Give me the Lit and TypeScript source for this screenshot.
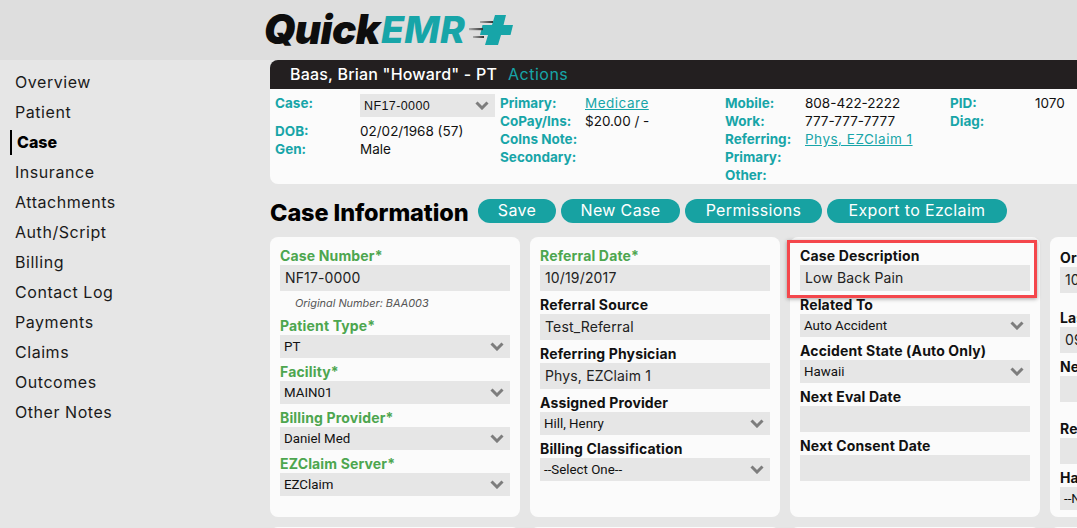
import { LitElement, html, css, svg } from "lit";
import { customElement } from "lit/decorators.js";

const chevron = html`<svg class="chev" width="14" height="9" viewBox="0 0 14 9"><polyline points="1.5,1.5 7,7 12.5,1.5" fill="none" stroke="#7d7d7d" stroke-width="3"/></svg>`;

const nav = ["Overview","Patient","Case","Insurance","Attachments","Auth/Script","Billing","Contact Log","Payments","Claims","Outcomes","Other Notes"];

type F = { l: string; v?: string; sel?: boolean; req?: boolean; note?: string; cls?: string };

const col1: F[] = [
  { l: "Case Number", v: "NF17-0000", req: true, note: "Original Number: BAA003" },
  { l: "Patient Type", v: "PT", sel: true, req: true },
  { l: "Facility", v: "MAIN01", sel: true, req: true },
  { l: "Billing Provider", v: "Daniel Med", sel: true, req: true },
  { l: "EZClaim Server", v: "EZClaim", sel: true, req: true },
];
const col2: F[] = [
  { l: "Referral Date", v: "10/19/2017", req: true },
  { l: "Referral Source", v: "Test_Referral" },
  { l: "Referring Physician", v: "Phys, EZClaim 1" },
  { l: "Assigned Provider", v: "Hill, Henry", sel: true },
  { l: "Billing Classification", v: "--Select One--", sel: true },
];
const col3: F[] = [
  { l: "Case Description", v: "Low Back Pain" },
  { l: "Related To", v: "Auto Accident", sel: true },
  { l: "Accident State (Auto Only)", v: "Hawaii", sel: true },
  { l: "Next Eval Date", v: "" },
  { l: "Next Consent Date", v: "" },
];
const col4: F[] = [
  { l: "Original Date", v: "10/19/2017", cls: "g0" },
  { l: "Last Seen Date", v: "09/12/2018", cls: "g16" },
  { l: "Next Visit Date", v: "" },
  { l: "Referral Expires", v: "", cls: "g18" },
  { l: "Has Attorney", v: "--None--", sel: true },
];

@customElement("app-root")
export class AppRoot extends LitElement {
  static styles = css`
    :host { display: block; width: 100%; height: 100vh; overflow: hidden; background: #e6e6e6; font-family: Inter, "Noto Sans", sans-serif; color: #111; font-size: 13.5px; }
    .top { height: 60px; background: #dedede; display: flex; align-items: center; padding-left: 264px; box-sizing: border-box; }
    .logo { display: flex; align-items: center; height: 44px; width: 250px; }
    .quick, .emr { font-family: Inter, sans-serif; font-style: italic; line-height: 44px; white-space: nowrap; }
    .quick { color: #0d0d0d; font-weight: 900; font-size: 40.5px; letter-spacing: -.6px; width: 117px; flex: none; }
    .emr { color: #17a5a8; font-weight: 800; font-size: 37.5px; letter-spacing: .2px; width: 87px; flex: none; }
    .plus { display: block; flex: none; }
    .shell { display: flex; }
    nav { width: 270px; flex: none; padding-top: 7px; box-sizing: border-box; }
    .nav-item { height: 30px; line-height: 30px; padding-left: 15px; font-size: 16px; letter-spacing: .55px; color: #1a1a1a; white-space: nowrap; }
    .nav-item.active { font-weight: 800; color: #000; padding-left: 5px; margin-left: 10px; border-left: 2px solid #000; height: 25px; line-height: 25px; margin-top: 3px; margin-bottom: 2px; letter-spacing: 0; }
    main { flex: 1; min-width: 0; overflow: hidden; }
    .bar { height: 29px; background: #231f20; color: #fff; border-top-left-radius: 8px; display: flex; align-items: center; padding: 0 0 2px 20px; box-sizing: border-box; font-size: 16px; font-weight: 500; white-space: nowrap; gap: 11px; width: 900px; letter-spacing: .2px; }
    .bar a { color: #17a5a8; font-weight: 400; letter-spacing: .5px; }
    .info { height: 95px; background: #fbfbfb; border-bottom-left-radius: 8px; display: flex; width: 900px; padding-left: 5px; box-sizing: border-box; font-size: 13.5px; line-height: 18px; }
    .icol { display: grid; width: 225px; flex: none; align-content: start; padding-top: 5px; box-sizing: border-box; }
    .icol.a { grid-template-columns: 85px 135px; }
    .icol.b { grid-template-columns: 85px 140px; }
    .icol.c { grid-template-columns: 80px 145px; }
    .k { color: #17a5a8; font-weight: 700; white-space: nowrap; }
    .v { white-space: nowrap; color: #111; }
    .info a { color: #17a5a8; text-decoration: underline; letter-spacing: .5px; }
    .case-sel { height: 23px; background: #e6e6e6; display: flex; align-items: center; justify-content: space-between; padding: 0 6px 0 4px; margin-bottom: 5px; font-size: 12.5px; font-family: "Liberation Sans", sans-serif; letter-spacing: .4px; }
    .head { display: flex; align-items: center; margin-top: 15px; height: 24px; white-space: nowrap; }
    h1 { font-size: 23.5px; font-weight: 800; margin: 2px 10px 0 0; color: #000; width: 198px; letter-spacing: -.1px; flex: none; }
    .btn { height: 24px; line-height: 23px; border-radius: 12px; background: #17a2a2; color: #fff; font-size: 16px; text-align: center; margin-right: 5px; flex: none; letter-spacing: .35px; }
    .cards { display: grid; grid-template-columns: repeat(4, 250px); gap: 10px; margin-top: 14px; width: 1040px; }
    .card { position: relative; height: 280px; box-sizing: border-box; background: #fbfbfb; border-radius: 8px; padding: 10px; }
    .card.l4 { padding-top: 12px; }
    .f { margin-top: 5px; }
    .f:first-child { margin-top: 0; }
    .f.g16 { margin-top: 16px; }
    .f.g18 { margin-top: 18px; }
    label { display: block; height: 18px; line-height: 18px; font-size: 14px; font-weight: 700; color: #111; white-space: nowrap; letter-spacing: .15px; }
    label.req { color: #4da64f; }
    .inp { height: 26px; line-height: 26px; background: #e6e6e6; padding: 0 5px; font-size: 14px; letter-spacing: .15px; color: #222; white-space: nowrap; overflow: hidden; }
    .sel { height: 23px; background: #e6e6e6; display: flex; align-items: center; justify-content: space-between; padding: 0 6px 0 4px; font-family: Roboto, "Liberation Sans", sans-serif; font-size: 13.3px; color: #111; white-space: nowrap; overflow: hidden; }
    .note { height: 21px; padding: 3px 0 0 15px; box-sizing: border-box; line-height: 18px; font-size: 10.9px; font-style: italic; color: #555; white-space: nowrap; }
    .hl { position: absolute; left: -3px; top: 3px; width: 250px; height: 58px; box-sizing: border-box; border: 3px solid #f4474c; box-shadow: 0 1px 4px rgba(0,0,0,.35); pointer-events: none; }
    .row2 { height: 10px; }
  `;

  field(f: F) {
    return html`<div class="f ${f.cls ?? ""}">
      <label class="${f.req ? "req" : ""}">${f.l}${f.req ? "*" : ""}</label>
      ${f.sel
        ? html`<div class="sel"><span>${f.v}</span>${chevron}</div>`
        : html`<div class="inp">${f.v}</div>`}
      ${f.note ? html`<div class="note">${f.note}</div>` : ""}
    </div>`;
  }

  render() {
    return html`
      <div class="top">
        <div class="logo">
          <span class="quick">Quick</span><span class="emr">EMR</span>
          <svg class="plus" width="46" height="44" viewBox="0 0 46 44">
            ${svg`<defs><linearGradient id="sp" x1="0" x2="1" y1="0" y2="0"><stop offset="0" stop-color="#aaa"/><stop offset="1" stop-color="#333"/></linearGradient></defs>
            <path d="M27 7 H38 L35.5 17 H45 L42.5 27 H33 L30 37 H17 L20 27 H12 L14.5 17 H24 Z" fill="#17a5a8"/>
            <rect x="12" y="13" width="13" height="2" fill="url(#sp)"/>
            <rect x="1" y="20" width="14" height="2.2" fill="url(#sp)"/>
            <rect x="5" y="28" width="11" height="2" fill="url(#sp)"/>`}
          </svg>
        </div>
      </div>
      <div class="shell">
        <nav>${nav.map((n) => html`<div class="nav-item ${n === "Case" ? "active" : ""}">${n}</div>`)}</nav>
        <main>
          <div class="bar"><span>Baas, Brian "Howard" - PT</span><a>Actions</a></div>
          <div class="info">
            <div class="icol a">
              <div class="k">Case:</div><div class="case-sel"><span>NF17-0000</span>${chevron}</div>
              <div class="k">DOB:</div><div class="v">02/02/1968 (57)</div>
              <div class="k">Gen:</div><div class="v">Male</div>
            </div>
            <div class="icol b">
              <div class="k">Primary:</div><div class="v"><a>Medicare</a></div>
              <div class="k">CoPay/Ins:</div><div class="v">$20.00 / -</div>
              <div class="k">CoIns Note:</div><div class="v"></div>
              <div class="k">Secondary:</div><div class="v"></div>
            </div>
            <div class="icol c">
              <div class="k">Mobile:</div><div class="v">808-422-2222</div>
              <div class="k">Work:</div><div class="v">777-777-7777</div>
              <div class="k">Referring:</div><div class="v"><a>Phys, EZClaim 1</a></div>
              <div class="k">Primary:</div><div class="v"></div>
              <div class="k">Other:</div><div class="v"></div>
            </div>
            <div class="icol b">
              <div class="k">PID:</div><div class="v">1070</div>
              <div class="k">Diag:</div><div class="v"></div>
            </div>
          </div>
          <div class="head">
            <h1>Case Information</h1>
            <div class="btn" style="width:78px">Save</div>
            <div class="btn" style="width:119px">New Case</div>
            <div class="btn" style="width:137px">Permissions</div>
            <div class="btn" style="width:180px">Export to Ezclaim</div>
          </div>
          <div class="cards">
            <div class="card">${col1.map((f) => this.field(f))}</div>
            <div class="card">${col2.map((f) => this.field(f))}</div>
            <div class="card">${col3.map((f) => this.field(f))}<div class="hl"></div></div>
            <div class="card l4">${col4.map((f) => this.field(f))}</div>
            <div class="card"></div><div class="card"></div><div class="card"></div><div class="card"></div>
          </div>
        </main>
      </div>
    `;
  }
}
